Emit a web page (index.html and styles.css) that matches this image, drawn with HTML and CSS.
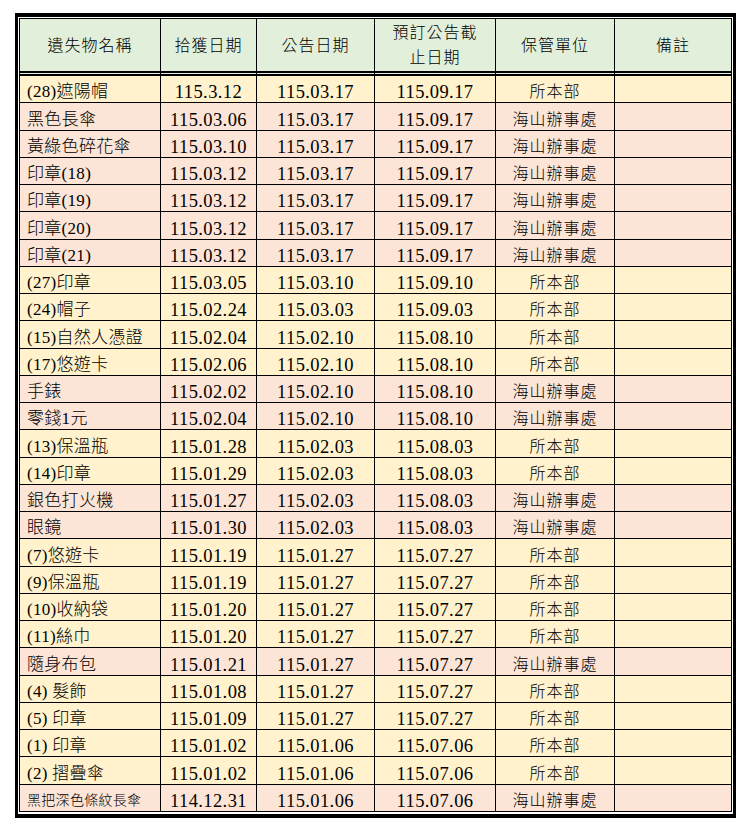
FILE: index.html
```html
<!DOCTYPE html>
<html lang="zh-Hant">
<head>
<meta charset="utf-8">
<title>遺失物招領公告</title>
<link rel="stylesheet" href="styles.css">
</head>
<body>
<div class="frame">
<table class="lost">
<colgroup>
<col class="c-name"><col class="c-date1"><col class="c-date2"><col class="c-date3"><col class="c-unit"><col class="c-note">
</colgroup>
<thead>
<tr class="head">
<th>遺失物名稱</th><th>拾獲日期</th><th>公告日期</th><th>預訂公告截<br>止日期</th><th>保管單位</th><th>備註</th>
</tr>
</thead>
<tbody>
<tr class="main"><td class="name">(28)遮陽帽</td><td class="date">115.3.12</td><td class="date">115.03.17</td><td class="date">115.09.17</td><td class="unit">所本部</td><td></td></tr>
<tr class="branch"><td class="name">黑色長傘</td><td class="date">115.03.06</td><td class="date">115.03.17</td><td class="date">115.09.17</td><td class="unit">海山辦事處</td><td></td></tr>
<tr class="branch"><td class="name">黃綠色碎花傘</td><td class="date">115.03.10</td><td class="date">115.03.17</td><td class="date">115.09.17</td><td class="unit">海山辦事處</td><td></td></tr>
<tr class="branch"><td class="name">印章(18)</td><td class="date">115.03.12</td><td class="date">115.03.17</td><td class="date">115.09.17</td><td class="unit">海山辦事處</td><td></td></tr>
<tr class="branch"><td class="name">印章(19)</td><td class="date">115.03.12</td><td class="date">115.03.17</td><td class="date">115.09.17</td><td class="unit">海山辦事處</td><td></td></tr>
<tr class="branch"><td class="name">印章(20)</td><td class="date">115.03.12</td><td class="date">115.03.17</td><td class="date">115.09.17</td><td class="unit">海山辦事處</td><td></td></tr>
<tr class="branch"><td class="name">印章(21)</td><td class="date">115.03.12</td><td class="date">115.03.17</td><td class="date">115.09.17</td><td class="unit">海山辦事處</td><td></td></tr>
<tr class="main"><td class="name">(27)印章</td><td class="date">115.03.05</td><td class="date">115.03.10</td><td class="date">115.09.10</td><td class="unit">所本部</td><td></td></tr>
<tr class="main"><td class="name">(24)帽子</td><td class="date">115.02.24</td><td class="date">115.03.03</td><td class="date">115.09.03</td><td class="unit">所本部</td><td></td></tr>
<tr class="main"><td class="name">(15)自然人憑證</td><td class="date">115.02.04</td><td class="date">115.02.10</td><td class="date">115.08.10</td><td class="unit">所本部</td><td></td></tr>
<tr class="main"><td class="name">(17)悠遊卡</td><td class="date">115.02.06</td><td class="date">115.02.10</td><td class="date">115.08.10</td><td class="unit">所本部</td><td></td></tr>
<tr class="branch"><td class="name">手錶</td><td class="date">115.02.02</td><td class="date">115.02.10</td><td class="date">115.08.10</td><td class="unit">海山辦事處</td><td></td></tr>
<tr class="branch"><td class="name">零錢1元</td><td class="date">115.02.04</td><td class="date">115.02.10</td><td class="date">115.08.10</td><td class="unit">海山辦事處</td><td></td></tr>
<tr class="main"><td class="name">(13)保溫瓶</td><td class="date">115.01.28</td><td class="date">115.02.03</td><td class="date">115.08.03</td><td class="unit">所本部</td><td></td></tr>
<tr class="main"><td class="name">(14)印章</td><td class="date">115.01.29</td><td class="date">115.02.03</td><td class="date">115.08.03</td><td class="unit">所本部</td><td></td></tr>
<tr class="branch"><td class="name">銀色打火機</td><td class="date">115.01.27</td><td class="date">115.02.03</td><td class="date">115.08.03</td><td class="unit">海山辦事處</td><td></td></tr>
<tr class="branch"><td class="name">眼鏡</td><td class="date">115.01.30</td><td class="date">115.02.03</td><td class="date">115.08.03</td><td class="unit">海山辦事處</td><td></td></tr>
<tr class="main"><td class="name">(7)悠遊卡</td><td class="date">115.01.19</td><td class="date">115.01.27</td><td class="date">115.07.27</td><td class="unit">所本部</td><td></td></tr>
<tr class="main"><td class="name">(9)保溫瓶</td><td class="date">115.01.19</td><td class="date">115.01.27</td><td class="date">115.07.27</td><td class="unit">所本部</td><td></td></tr>
<tr class="main"><td class="name">(10)收納袋</td><td class="date">115.01.20</td><td class="date">115.01.27</td><td class="date">115.07.27</td><td class="unit">所本部</td><td></td></tr>
<tr class="main"><td class="name">(11)絲巾</td><td class="date">115.01.20</td><td class="date">115.01.27</td><td class="date">115.07.27</td><td class="unit">所本部</td><td></td></tr>
<tr class="branch"><td class="name">隨身布包</td><td class="date">115.01.21</td><td class="date">115.01.27</td><td class="date">115.07.27</td><td class="unit">海山辦事處</td><td></td></tr>
<tr class="main"><td class="name">(4) 髮飾</td><td class="date">115.01.08</td><td class="date">115.01.27</td><td class="date">115.07.27</td><td class="unit">所本部</td><td></td></tr>
<tr class="main"><td class="name">(5) 印章</td><td class="date">115.01.09</td><td class="date">115.01.27</td><td class="date">115.07.27</td><td class="unit">所本部</td><td></td></tr>
<tr class="main"><td class="name">(1) 印章</td><td class="date">115.01.02</td><td class="date">115.01.06</td><td class="date">115.07.06</td><td class="unit">所本部</td><td></td></tr>
<tr class="main"><td class="name">(2) 摺疊傘</td><td class="date">115.01.02</td><td class="date">115.01.06</td><td class="date">115.07.06</td><td class="unit">所本部</td><td></td></tr>
<tr class="branch"><td class="name small">黑把深色條紋長傘</td><td class="date">114.12.31</td><td class="date">115.01.06</td><td class="date">115.07.06</td><td class="unit">海山辦事處</td><td></td></tr>
</tbody>
</table>
</div>
</body>
</html>
```

FILE: styles.css
```css
html, body {
  margin: 0;
  padding: 0;
  background: #ffffff;
}

body {
  padding: 13px 0 0 15px;
  font-family: "Liberation Serif", "Noto Sans CJK TC", serif;
  color: #000;
}

.frame {
  display: inline-block;
  border-style: solid;
  border-color: #000;
  border-width: 4px 3px 4px 3px;
  padding: 1px 1px 2px 1px;
  background: #fff;
}

.lost {
  table-layout: fixed;
  width: 713px;
  border-collapse: separate;
  border-spacing: 0;
  border-top: 1px solid #000;
  border-left: 1px solid #000;
}

.c-name { width: 141px; }
.c-date1 { width: 96px; }
.c-date2 { width: 118px; }
.c-date3 { width: 121px; }
.c-unit { width: 119px; }
.c-note { width: 117px; }

.lost th,
.lost td {
  border-right: 1px solid #000;
  border-bottom: 1px solid #000;
  padding: 0;
  overflow: hidden;
  white-space: nowrap;
}

.head {
  height: 57px;
  background: #e2efda;
}

.head th {
  border-bottom: 5px double #000;
  font-weight: 300;
  font-size: 16px;
  line-height: 25px;
  letter-spacing: 1px;
  vertical-align: middle;
  text-align: center;
}

.main, .branch {
  height: 27.25px;
}

.main { background: #fff2cc; }
.branch { background: #fce4d6; }

.lost tbody td {
  vertical-align: bottom;
  line-height: 20px;
  font-weight: 300;
}

.name {
  font-size: 17px;
  text-align: left;
  padding-left: 7px !important;
  letter-spacing: 0.3px;
}

.name.small {
  font-size: 14px;
  letter-spacing: 0.3px;
}

.date {
  font-size: 18.5px;
  letter-spacing: 0.4px;
  text-align: center;
}

.unit {
  font-size: 16px;
  letter-spacing: 1px;
  text-align: center;
}
```
